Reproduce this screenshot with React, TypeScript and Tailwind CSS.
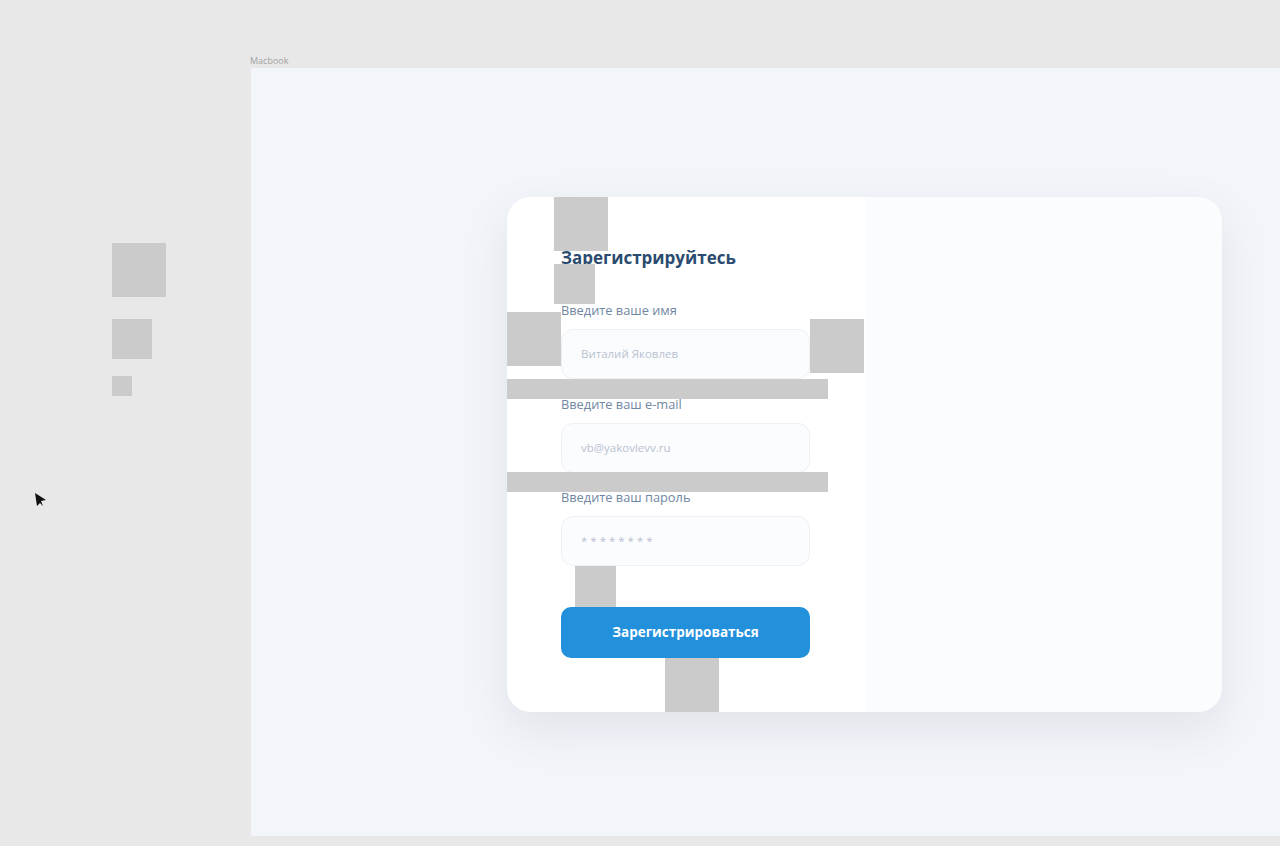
import React from 'react';

// Figma spacing markers that sit over the card content
const markers = [
  'left-[47px] top-0 w-[54px] h-[54px]',
  'left-[47px] top-[67px] w-[41px] h-[40px]',
  'left-0 top-[115px] w-[54px] h-[54px]',
  'left-[303px] top-[122px] w-[54px] h-[54px]',
  'left-0 top-[182px] w-[321px] h-[20px]',
  'left-0 top-[275px] w-[321px] h-[20px]',
  'left-[68px] top-[369px] w-[41px] h-[41px]',
  'left-[158px] top-[461px] w-[54px] h-[54px]',
];

const Field = ({ label, placeholder, className }: { label: string; placeholder: string; className?: string }) => (
  <div className={className}>
    <div className="text-[12.8px] leading-[18px] text-[#7086a3]">{label}</div>
    <div className="mt-[10px] h-[50px] w-[249px] rounded-[12px] border border-[#edf0f5] bg-[#fbfcfe] flex items-center px-[19px] text-[11.5px] text-[#b8c2d0]">
      {placeholder}
    </div>
  </div>
);

export default function App() {
  return (
    <div className="relative w-[1280px] h-[846px] bg-[#e8e8e8] flex overflow-hidden" style={{ fontFamily: '"Open Sans", "Noto Sans", sans-serif' }}>
      {/* Left layers column */}
      <div className="w-[251px] shrink-0 pl-[112px] pt-[243px] flex flex-col items-start">
        <div className="w-[54px] h-[54px] bg-[#cbcbcb]" />
        <div className="mt-[22px] w-[40px] h-[40px] bg-[#cbcbcb]" />
        <div className="mt-[17px] w-[20px] h-[20px] bg-[#cbcbcb]" />
      </div>

      {/* cursor */}
      <svg className="absolute left-[34px] top-[492px]" width="14" height="16" viewBox="0 0 14 16">
        <path d="M1 1 L12 8 L7 9 L9 14 L6 11 L3 14 Z" fill="#111" />
      </svg>

      {/* Frame */}
      <div className="flex-1 pt-[55px]">
        <div className="text-[9px] leading-[12px] text-[#a3a3a3] -ml-px">Macbook</div>
        <div className="mt-px h-[768px] bg-[#f2f5f9] pl-[256px] pt-[129px]">
          <div className="relative w-[715px] h-[515px] rounded-[24px] overflow-hidden grid grid-cols-[359px_1fr] shadow-[0_18px_45px_rgba(120,130,150,0.14)]">
            <div className="bg-white pl-[54px] pt-[49px]">
              <h1 className="text-[17px] leading-[24px] font-bold text-[#2b4c70]">Зарегистрируйтесь</h1>
              <Field className="mt-[31px]" label="Введите ваше имя" placeholder="Виталий Яковлев" />
              <Field className="mt-[16px]" label="Введите ваш e-mail" placeholder="vb@yakovlevv.ru" />
              <Field className="mt-[15px]" label="Введите ваш пароль" placeholder="* * * * * * * *" />
              <button className="mt-[41px] h-[51px] w-[249px] rounded-[10px] bg-[#2390db] text-white text-[13.5px] font-bold">
                Зарегистрироваться
              </button>
            </div>
            <div className="bg-[#fbfcfe]" />
            {markers.map((m, i) => (
              <div key={i} className={`absolute bg-[#cbcbcb] ${m}`} />
            ))}
          </div>
        </div>
      </div>
    </div>
  );
}
